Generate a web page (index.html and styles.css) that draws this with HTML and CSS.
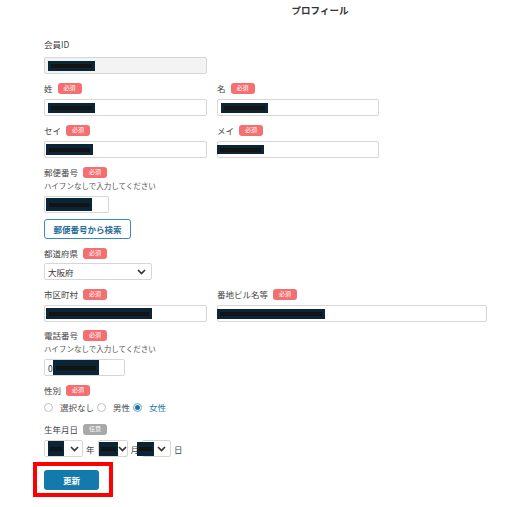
FILE: index.html
```html
<!DOCTYPE html>
<html lang="ja">
<head>
<meta charset="utf-8">
<title>プロフィール</title>
<link rel="stylesheet" href="styles.css">
</head>
<body>
<div class="page">
  <h1 class="title">プロフィール</h1>
  <form class="form">
    <div class="field">
      <div class="label-row"><span class="label">会員ID</span></div>
      <div class="box box-readonly w-half mt7"><span class="redact"></span></div>
    </div>

    <div class="row">
      <div class="field w-half">
        <div class="label-row"><span class="label">姓</span><span class="badge">必須</span></div>
        <div class="box w-half"><span class="redact"></span></div>
      </div>
      <div class="field">
        <div class="label-row"><span class="label">名</span><span class="badge">必須</span></div>
        <div class="box w-right"><span class="redact"></span></div>
      </div>
    </div>

    <div class="row">
      <div class="field w-half">
        <div class="label-row"><span class="label">セイ</span><span class="badge">必須</span></div>
        <div class="box w-half"><span class="redact r-sei"></span></div>
      </div>
      <div class="field">
        <div class="label-row"><span class="label">メイ</span><span class="badge">必須</span></div>
        <div class="box w-right"><span class="redact r-mei"></span></div>
      </div>
    </div>

    <div class="field">
      <div class="label-row"><span class="label">郵便番号</span><span class="badge">必須</span></div>
      <div class="hint">ハイフンなしで入力してください</div>
      <div class="box w-zip mt4"><span class="redact r-zip"></span></div>
      <button type="button" class="btn-outline">郵便番号から検索</button>
    </div>

    <div class="field">
      <div class="label-row"><span class="label">都道府県</span><span class="badge">必須</span></div>
      <div class="sel w-pref mt4"><span class="sel-text">大阪府</span><svg class="chev" width="9" height="6" viewBox="0 0 9 6"><polyline points="1,1 4.5,4.5 8,1" fill="none" stroke="#333" stroke-width="1.7"/></svg></div>
    </div>

    <div class="row">
      <div class="field w-half">
        <div class="label-row"><span class="label">市区町村</span><span class="badge">必須</span></div>
        <div class="box w-half"><span class="redact r-city"></span></div>
      </div>
      <div class="field">
        <div class="label-row"><span class="label">番地ビル名等</span><span class="badge">必須</span></div>
        <div class="box w-wide"><span class="redact r-addr"></span></div>
      </div>
    </div>

    <div class="field mt7">
      <div class="label-row"><span class="label">電話番号</span><span class="badge">必須</span></div>
      <div class="hint">ハイフンなしで入力してください</div>
      <div class="box w-tel mt4"><span class="tel-0">0</span><span class="redact r-tel"></span></div>
    </div>

    <div class="field">
      <div class="label-row"><span class="label">性別</span><span class="badge">必須</span></div>
      <div class="radios">
        <label class="radio"><input type="radio" name="sex"><span>選択なし</span></label>
        <label class="radio"><input type="radio" name="sex"><span>男性</span></label>
        <label class="radio is-on"><input type="radio" name="sex" checked><span>女性</span></label>
      </div>
    </div>

    <div class="field mt10">
      <div class="label-row"><span class="label">生年月日</span><span class="badge optional">任意</span></div>
      <div class="dates">
        <div class="sel sel-y"><span class="redact r-y"></span><svg class="chev" width="9" height="6" viewBox="0 0 9 6"><polyline points="1,1 4.5,4.5 8,1" fill="none" stroke="#333" stroke-width="1.7"/></svg></div>
        <span class="unit">年</span>
        <div class="sel sel-m"><span class="redact r-m"></span><svg class="chev" width="9" height="6" viewBox="0 0 9 6"><polyline points="1,1 4.5,4.5 8,1" fill="none" stroke="#333" stroke-width="1.7"/></svg></div>
        <span class="unit">月</span>
        <div class="sel sel-d"><span class="redact r-d"></span><svg class="chev" width="9" height="6" viewBox="0 0 9 6"><polyline points="1,1 4.5,4.5 8,1" fill="none" stroke="#333" stroke-width="1.7"/></svg></div>
        <span class="unit">日</span>
      </div>
    </div>

    <div class="highlight">
      <button type="submit" class="btn-primary">更新</button>
    </div>
  </form>
</div>
</body>
</html>
```

FILE: styles.css
```css
* { box-sizing: border-box; }
html, body { margin: 0; padding: 0; background: #fff; }
body {
  font-family: "Noto Sans CJK JP", "Noto Sans", sans-serif;
  font-size: 8.5px;
  color: #4a4a4a;
}
.page { padding-left: 44px; }
.title {
  margin: 0;
  height: 20px;
  line-height: 20px;
  padding-left: 87px;
  text-align: center;
  font-size: 9.5px;
  font-weight: 700;
  color: #333;
}
.form {
  display: flex;
  flex-direction: column;
  align-items: flex-start;
}
.form > * { margin-top: 8px; }
.form > :first-child { margin-top: 18px; }
.form > .mt7 { margin-top: 7px; }
.form > .mt10 { margin-top: 10px; }

.row { display: flex; gap: 10px; }
.field { display: flex; flex-direction: column; align-items: flex-start; }

.label-row {
  display: flex;
  align-items: center;
  gap: 5px;
  height: 12px;
  line-height: 12px;
}
.label { color: #444; }
.badge {
  display: inline-flex;
  align-items: center;
  justify-content: center;
  width: 24px;
  height: 11px;
  border-radius: 3px;
  background: #f46f6f;
  color: #fff;
  font-size: 6px;
  line-height: 1;
}
.badge.optional { background: #a8a8a8; }

.hint {
  margin-top: 2px;
  height: 12px;
  line-height: 12px;
  font-size: 7.5px;
  color: #555;
}

.box {
  display: flex;
  align-items: center;
  height: 17px;
  margin-top: 5px;
  padding-left: 3px;
  border: 1px solid #d6d6d6;
  border-radius: 2px;
  background: #fff;
  overflow: visible;
}
.box.mt7 { margin-top: 7px; }
.box.mt4 { margin-top: 4px; }
.box-readonly { background: #f3f3f3; }
.w-half { width: 163px; }
.w-right { width: 162px; }
.w-wide { width: 270px; }
.w-zip { width: 65px; }
.w-tel { width: 81px; }
.w-pref { width: 108px; }

.redact {
  display: flex;
  align-items: center;
  flex: none;
  width: 47px;
  height: 10px;
  padding: 0 3px;
  background: #092536;
}
.redact::before {
  content: "";
  flex: 1;
  height: 4px;
  background: #131313;
}
.r-sei { margin-left: -2px; height: 11px; }
.r-mei { margin-left: -4px; height: 9px; }
.r-zip { margin-left: -2px; width: 46px; height: 13px; }
.r-city { margin-left: -2px; width: 106px; height: 11px; }
.r-addr { margin-left: -4px; width: 108px; }
.r-tel { width: 46px; height: 15px; }
.tel-0 { color: #333; width: 5px; }

.btn-outline {
  margin-top: 6px;
  height: 20px;
  padding: 0 8.5px;
  border: 1px solid #3b89b4;
  border-radius: 3px;
  background: #fff;
  color: #2a6d96;
  font-family: inherit;
  font-size: 8.5px;
  font-weight: 700;
  line-height: 18px;
}

.sel {
  display: flex;
  align-items: center;
  justify-content: space-between;
  height: 17px;
  padding: 0 5px 0 3px;
  border: 1px solid #d6d6d6;
  border-radius: 2px;
  background: #fff;
}
.sel.mt4 { margin-top: 4px; }
.sel-text { color: #333; }
.chev { flex: none; display: block; }

.radios {
  display: flex;
  align-items: center;
  gap: 3px;
  height: 12px;
  margin-top: 5px;
}
.radio {
  display: flex;
  align-items: center;
  gap: 7px;
  color: #4a4a4a;
}
.radio input {
  appearance: none;
  -webkit-appearance: none;
  margin: 0;
  width: 9px;
  height: 9px;
  border: 1px solid #c2c2c2;
  border-radius: 50%;
  background: #fff;
}
.radio input:checked {
  border-color: #9fc4da;
  background: #1a76a8;
  box-shadow: inset 0 0 0 1px #fff;
}
.radio.is-on span { color: #1a78b0; }

.dates {
  display: flex;
  align-items: center;
  gap: 3px;
  margin-top: 5px;
}
.sel-y { width: 39px; padding-left: 3px; padding-right: 3px; }
.sel-m { width: 30px; padding-left: 0; padding-right: 2px; }
.sel-d { width: 29px; padding-left: 0; padding-right: 4px; }
.r-y { width: 16px; height: 15px; padding: 0 2px; }
.r-m { width: 19px; height: 14px; padding: 0 2px; }
.r-d { width: 17px; height: 14px; margin-left: -6px; padding: 0 2px; }
.unit { color: #4a4a4a; }

.highlight {
  margin-top: 5px;
  margin-left: -11px;
  padding: 4px 10px 3px 7px;
  border: 4px solid #ff0000;
}
.btn-primary {
  display: block;
  width: 55px;
  height: 20px;
  padding: 0;
  border: none;
  border-radius: 3px;
  background: #137aac;
  color: #fff;
  font-family: inherit;
  font-size: 8.5px;
  font-weight: 700;
}
```
